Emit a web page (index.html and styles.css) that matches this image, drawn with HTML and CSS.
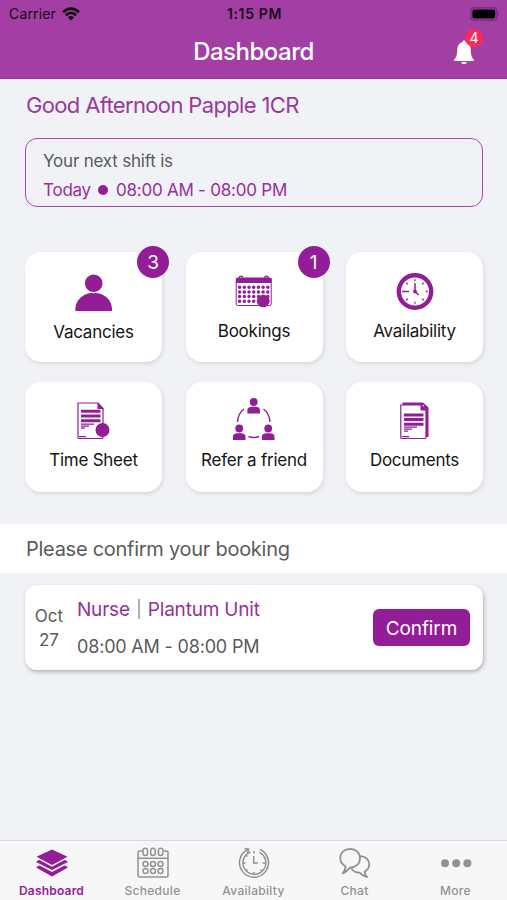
FILE: index.html
```html
<!DOCTYPE html>
<html lang="en">
<head>
<meta charset="utf-8">
<title>Dashboard</title>
<link rel="stylesheet" href="styles.css">
</head>
<body>
<div class="app">
  <header class="header">
    <div class="status">
      <div class="carrier"><span>Carrier</span>
        <svg width="18" height="14" viewBox="0 0 18 14" fill="none" stroke="#0c030c" stroke-width="2.6"><path d="M1 5.2Q9-2 17 5.2M3.8 8.2Q9 3.5 14.2 8.2"/><path d="M9 13.5L5.9 10.3Q9 7.8 12.1 10.3Z" fill="#0c030c" stroke="none"/></svg>
      </div>
      <span class="clock">1:15 PM</span>
      <svg class="battery" width="30" height="14" viewBox="0 0 30 14"><rect x=".8" y=".8" width="26" height="12.4" rx="3.5" fill="none" stroke="#6f2c71" stroke-width="1.2"/><rect x="2.4" y="2.4" width="22.8" height="9.2" rx="2" fill="#000"/><path d="M28 4.8Q30 7 28 9.2Z" fill="#6f2c71"/></svg>
    </div>
    <div class="titlebar">
      <h1>Dashboard</h1>
      <div class="bell">
        <svg width="22" height="25" viewBox="0 0 22 25" fill="#fff"><path d="M11 .5C12 .5 12.4 1.1 12.5 2.1C16 3 17.6 5.8 17.7 9.3C17.9 14.5 18.3 17.3 20.8 19.5V21H1.2V19.5C3.7 17.3 4.1 14.5 4.3 9.3C4.4 5.8 6 3 9.5 2.1C9.6 1.1 10 .5 11 .5Z"/><path d="M8.1 22H13.9Q13.2 24.2 11 24.2T8.1 22Z"/></svg>
        <span class="alert">4</span>
      </div>
    </div>
  </header>
  <main class="content">
    <h2 class="greeting">Good Afternoon Papple 1CR</h2>
    <section class="shift">
      <p class="next">Your next shift is</p>
      <p class="when"><span class="today">Today</span><i class="dot"></i><span class="hours">08:00 AM - 08:00 PM</span></p>
    </section>
    <section class="grid">
      <a class="tile t-vac"><svg width="44" height="44" viewBox="0 0 44 44" fill="#931c97"><circle cx="21.700" cy="11.300" r="8.800"/><path d="M3.400 39V36Q4.200 27 12.700 22.700Q17.200 20.400 21.700 21.300Q26.200 20.400 30.700 22.700Q39.200 27 40 36V39Z"/></svg><span class="label">Vacancies</span><b class="badge">3</b></a>
      <a class="tile t-book"><svg width="44" height="44" viewBox="0 0 44 44"><rect x="4.200" y="6" width="35" height="27.500" rx="1.500" fill="#fff" stroke="#931c97"/><path d="M4 6H39.500V11H4Z" fill="#931c97"/><g fill="none" stroke="#931c97" stroke-width="1.300"><circle cx="9" cy="6" r="1.800"/><circle cx="34.500" cy="6" r="1.800"/></g><path d="M7.600 15.200H36M7.600 19.900H36M7.600 24.500H36M7.600 29.200H36" stroke="#931c97" stroke-width="3.500" stroke-linecap="round" stroke-dasharray="0 4.700"/><circle cx="31.200" cy="29" r="6.300" fill="#931c97"/></svg><span class="label">Bookings</span><b class="badge">1</b></a>
      <a class="tile t-avail"><svg width="44" height="44" viewBox="0 0 44 44" fill="none" stroke="#931c97"><circle cx="22" cy="19.500" r="16.200" stroke-width="4.400"/><g stroke-width="1.300"><path d="M22 7.200V9.200M22 29.800V31.800M32.700 19.500H34.700M9 19.500H16M13.300 10.800L14.900 12.400M30.700 10.800L29.100 12.400M13.300 28.200L14.900 26.600M30.700 28.200L29.100 26.600"/><path d="M22 11V19.500L25.700 23" stroke-width="1.500"/></g><circle cx="22" cy="19.500" r="1.900" fill="#931c97" stroke="none"/></svg><span class="label">Availability</span></a>
      <a class="tile t-time"><svg width="44" height="44" viewBox="0 0 44 44"><path d="M6 5H26L31 10.500V39.500Q31 40.500 30 40.500H7Q6 40.500 6 39.500Z" fill="#fff" stroke="#931c97" stroke-width="1.200"/><path d="M25.500 4.500L32 11H25.500Z" fill="#931c97"/><path d="M9 13.200H28.500M9 18H28.500M9 22.700H28.500" stroke="#931c97" stroke-width="3"/><path d="M9 26.200H22M9 28.200H17M9 30.200H13M7 38.700H14" stroke="#931c97" stroke-width="1.200"/><circle cx="30.500" cy="32" r="7" fill="#931c97"/></svg><span class="label">Time Sheet</span></a>
      <a class="tile t-refer"><svg width="44" height="44" viewBox="0 0 44 44" fill="#931c97"><g id="person"><circle cx="21.700" cy="4" r="3.900"/><path d="M15.400 15.500V12.500C15.400 8.700 18.700 8.700 21.700 8.700S28 8.700 28 12.500V15.500Z"/></g><use href="#person" x="-14.500" y="26.500"/><use href="#person" x="14.500" y="26.500"/><path d="M12 11Q6 15.500 5.500 24M31.500 11Q37.500 15.500 38 24M16.500 38.500Q21.700 40.500 27 38.500" fill="none" stroke="#931c97" stroke-width="1.400"/></svg><span class="label">Refer a friend</span></a>
      <a class="tile t-doc"><svg width="44" height="44" viewBox="0 0 44 44"><path d="M9.500 4.500H30L35.500 9.500V39H31V7H9.500Z" fill="#931c97"/><path d="M7.800 7H28.500L33 11.500V39.500Q33 40.500 32 40.500H8.800Q7.800 40.500 7.800 39.500Z" fill="#fff" stroke="#931c97" stroke-width="1.200"/><path d="M27.500 6.500L33.500 12.500H27.500Z" fill="#931c97"/><path d="M11 17H30.500M11 21.500H30.500M11 26.200H30.500" stroke="#931c97" stroke-width="3"/><path d="M11 29.200H24M11 31.200H19M11 33.200H15M9 38.700H16" stroke="#931c97" stroke-width="1.200"/></svg><span class="label">Documents</span></a>
    </section>
  </main>
  <h2 class="band"><span>Please confirm your booking</span></h2>
  <section class="booking">
    <div class="date"><span>Oct</span><span>27</span></div>
    <div class="details">
      <p class="role"><span class="nurse">Nurse</span><i></i><span class="unit">Plantum Unit</span></p>
      <p class="time">08:00 AM - 08:00 PM</p>
    </div>
    <button class="confirm">Confirm</button>
  </section>
  <nav class="tabs">
    <a class="tab active"><svg width="34" height="34" viewBox="0 0 34 34" fill="#931c97"><path d="M17 3.500L32.500 10.800L17 19L1.500 10.800Z"/><path d="M1.500 15.200L4.500 14L17 20.700L29.500 14L32.500 15.200V16.200L17 24L1.500 16.200Z"/><path d="M1.500 20.700L4.500 19.500L17 26L29.500 19.500L32.500 20.700V21.700L17 30.500L1.500 21.700Z"/></svg><span>Dashboard</span></a>
    <a class="tab"><svg width="34" height="34" viewBox="0 0 34 34" fill="none" stroke="#929292" stroke-width="1.500"><path d="M7 5H3.500Q2 5 2 6.500V29.500Q2 31 3.500 31H30.500Q32 31 32 29.500V6.500Q32 5 30.500 5H28M2 12.200H32"/><rect x="7" y="2.200" width="4.500" height="7.300" rx="2.200"/><rect x="14.700" y="2.200" width="4.500" height="7.300" rx="2.200"/><rect x="22.400" y="2.200" width="4.500" height="7.300" rx="2.200"/><circle cx="9.500" cy="18" r="2.500"/><circle cx="17" cy="18" r="2.500"/><circle cx="24.500" cy="18" r="2.500"/><circle cx="9.500" cy="25" r="2.500"/><circle cx="17" cy="25" r="2.500"/><circle cx="24.500" cy="25" r="2.500"/></svg><span>Schedule</span></a>
    <a class="tab"><svg width="34" height="34" viewBox="0 0 34 34" fill="none" stroke="#929292" stroke-width="1.500"><path d="M11 3.500A14.500 14.500 0 1 0 23 3.500"/><path d="M7.500 2.500L11.700 3.200L10.500 7.200"/><path d="M13.500 6A11.500 11.500 0 1 0 22.500 6.500"/><path d="M16.700 10V17H21M17 5V7.500M17 26V28.500M6 17H8.500M25.500 17H28M9.300 9.300L10.500 10.500M9.300 24.700L10.500 23.500M24.700 24.700L23.500 23.500"/></svg><span>Availabilty</span></a>
    <a class="tab"><svg width="34" height="34" viewBox="0 0 34 34" fill="none" stroke="#929292" stroke-width="1.800" stroke-linejoin="round"><path d="M7.500 20.300C4 18.500 2.300 15.500 2.300 12C2.300 6.500 6.500 3 12.200 3S22 6.800 22 12.200C22 17.700 18 21.500 12 21.600Q9 25.500 4.700 27.300Q7.800 24 7.500 20.300Z"/><path d="M22 10.200C28 10.200 31.200 14 31.200 18.500C31.200 21.700 29.500 24 26.700 25.500Q26.500 29 29 31Q24.500 30 21.500 26.700C17 26.700 14.200 24.500 13 21.500"/></svg><span>Chat</span></a>
    <a class="tab"><svg width="34" height="34" viewBox="0 0 34 34" fill="#929292"><circle cx="6" cy="17.300" r="4"/><circle cx="17.200" cy="17.300" r="4"/><circle cx="28.400" cy="17.300" r="4"/></svg><span>More</span></a>
  </nav>
</div>
</body>
</html>
```

FILE: styles.css
```css
* { box-sizing: border-box; margin: 0; padding: 0; }
body { font-family: Inter, "Liberation Sans", sans-serif; color: #5a5a5c; background: #f1f2f6; }
h1, h2, b { font-weight: 400; }
svg { display: block; flex: none; }
span { white-space: nowrap; }
.app { width: 507px; height: 900px; display: flex; flex-direction: column; overflow: hidden; }
.header { height: 79px; background: #a33fa4; border-bottom: 1px solid #983499; flex: none; }
.status { height: 27px; display: grid; grid-template-columns: 1fr auto 1fr; align-items: center; padding: 0 7px 0 9px; color: #180618; }
.carrier { display: flex; align-items: center; gap: 6px; font-size: 14px; line-height: 27px; letter-spacing: 0.15px; }
.clock { font-size: 14px; font-weight: 600; letter-spacing: 0.65px; }
.battery { justify-self: end; }
.titlebar { height: 51px; display: grid; grid-template-columns: 1fr auto 1fr; }
.titlebar h1 { grid-column: 2; font-size: 24px; font-weight: 500; line-height: 49px; color: #fff; letter-spacing: -0.5px; }
.bell { position: relative; justify-self: end; margin: 13px 32px 0 0; height: 25px; }
.alert { position: absolute; left: 12px; top: -11px; width: 18px; height: 18px; border-radius: 50%; background: #fa2b55; color: #fff; font-size: 14px; line-height: 18px; text-align: center; }
.content { padding: 0 24px 0 25px; height: 445px; flex: none; }
.greeting { font-size: 22px; line-height: 28px; padding: 12px 0 0 1px; height: 59px; color: #993a9d; letter-spacing: -0.65px; }
.shift { height: 69px; border: 1.5px solid #aa4aad; border-radius: 12px; padding: 9px 17px; font-size: 17px; }
.next { line-height: 26px; letter-spacing: -0.2px; }
.when { display: flex; align-items: center; line-height: 32px; color: #982f9d; letter-spacing: -0.23px; }
.dot { width: 10px; height: 10px; border-radius: 50%; background: #931c97; margin: 0 8px 0 7px; }
.grid { display: grid; grid-template-columns: repeat(3, 137px); justify-content: space-between; grid-auto-rows: 110px; row-gap: 20px; margin-top: 45px; }
.tile { position: relative; background: #fff; border-radius: 16px; box-shadow: 1px 2px 4px #0000001c; display: flex; flex-direction: column; align-items: center; padding-top: 20px; color: #151515; }
.label { font-size: 17px; line-height: 22px; margin-top: 3.5px; letter-spacing: -0.25px; }
.t-vac .label { margin-top: 4.5px; }
.t-time, .t-refer, .t-doc { padding-top: 16px; }
.t-time .label, .t-refer .label, .t-doc .label { margin-top: 7px; }
.badge { position: absolute; right: -7px; top: -6px; width: 32px; height: 32px; border-radius: 50%; background: #931c97; color: #fff; font-size: 19px; line-height: 33px; text-align: center; }
.band { height: 49px; background: #fff; padding-left: 26px; font-size: 20px; line-height: 51px; letter-spacing: -0.27px; flex: none; }
.booking { margin: 12px 24px 0 25px; height: 85px; flex: none; background: #fff; border-radius: 12px; box-shadow: 1px 2px 4px #00000045; display: flex; align-items: center; padding-right: 13px; }
.date { width: 48px; display: flex; flex-direction: column; align-items: center; font-size: 17px; line-height: 24px; }
.details { flex: 1; padding-left: 4px; }
.role { display: flex; align-items: center; font-size: 19px; line-height: 37px; color: #982f9d; letter-spacing: -0.2px; }
.role i { width: 2px; height: 20px; background: #b0b0b2; margin: 0 8px; }
.time { font-size: 18px; line-height: 37px; letter-spacing: -0.18px; }
.confirm { width: 97px; height: 37px; border: 0; border-radius: 6px; background: #931c97; color: #fff; font: 19px/37px Inter, sans-serif; padding-top: 1px; letter-spacing: -0.1px; }
.tabs { height: 60px; margin-top: auto; flex: none; background: #f7f7f8; border-top: 1px solid #d9d9de; display: grid; grid-template-columns: 1fr 1fr 1fr 1fr 1fr; padding: 0 1px; }
.tab { display: flex; flex-direction: column; align-items: center; padding-top: 5px; color: #929292; font-size: 12px; font-weight: 500; letter-spacing: 0.3px; line-height: 22px; }
.active { color: #931c97; font-weight: 600; letter-spacing: 0.2px; }
```
